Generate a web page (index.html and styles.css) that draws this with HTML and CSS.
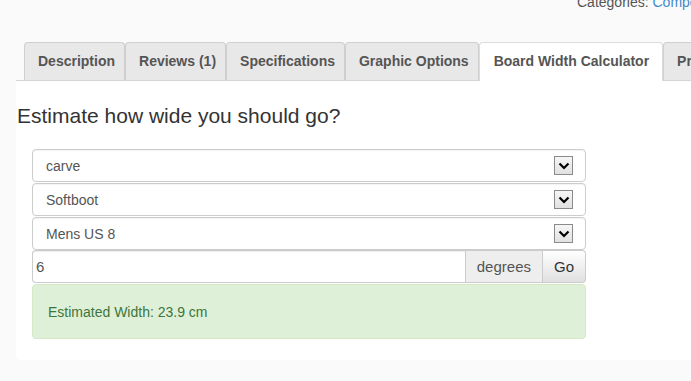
FILE: index.html
```html
<!DOCTYPE html>
<html lang="en">
<head>
    <meta charset="UTF-8">
    <meta name="viewport" content="width=device-width, initial-scale=1.0">
    <title>Board Width Calculator</title>
    <link rel="stylesheet" href="styles.css">
</head>
<body>
    <div class="page">
        <div class="categories">Categories: <a href="#">Components</a></div>

        <ul class="tabs">
            <li class="tab">Description</li>
            <li class="tab">Reviews (1)</li>
            <li class="tab">Specifications</li>
            <li class="tab">Graphic Options</li>
            <li class="tab active">Board Width Calculator</li>
            <li class="tab">Product Info</li>
        </ul>

        <div class="panel">
            <h3>Estimate how wide you should go?</h3>

            <form class="calc-form">
                <div class="select-box">
                    <span>carve</span>
                    <span class="arrow"><svg width="12" height="8" viewBox="0 0 12 8"><path d="M1.5 1.5 L6 6 L10.5 1.5" fill="none" stroke="#000" stroke-width="2.2"/></svg></span>
                </div>
                <div class="select-box">
                    <span>Softboot</span>
                    <span class="arrow"><svg width="12" height="8" viewBox="0 0 12 8"><path d="M1.5 1.5 L6 6 L10.5 1.5" fill="none" stroke="#000" stroke-width="2.2"/></svg></span>
                </div>
                <div class="select-box last">
                    <span>Mens US 8</span>
                    <span class="arrow"><svg width="12" height="8" viewBox="0 0 12 8"><path d="M1.5 1.5 L6 6 L10.5 1.5" fill="none" stroke="#000" stroke-width="2.2"/></svg></span>
                </div>
                <div class="input-group">
                    <input type="text" class="angle-input" value="6">
                    <span class="addon">degrees</span>
                    <button type="button" class="go-btn">Go</button>
                </div>
                <div class="alert-success">Estimated Width: 23.9 cm</div>
            </form>
        </div>
    </div>
</body>
</html>
```

FILE: styles.css
```css
/* Mise en forme générale */
body {
    font-family: "Liberation Sans", Arial, sans-serif;
    margin: 0;
    padding: 0;
    background: #fafafa;
    color: #333;
    overflow: hidden;
}

.page {
    width: 820px;
}

.categories {
    margin: -8px 0 0 577px;
    font-size: 14px;
    line-height: 20px;
    color: #555;
    white-space: nowrap;
}

.categories a {
    color: #428bca;
    text-decoration: none;
}

/* Onglets */
.tabs {
    list-style: none;
    display: flex;
    margin: 30px 0 0 16px;
    padding: 0 0 0 8px;
    border-bottom: 1px solid #d4d4d4;
}

.tab {
    font-size: 14px;
    font-weight: bold;
    color: #555;
    background: #e9e8e9;
    border: 1px solid #cfcfcf;
    border-bottom: none;
    border-radius: 4px 4px 0 0;
    padding: 0 9px 0 13px;
    height: 37px;
    line-height: 37px;
    white-space: nowrap;
}

.tab.active {
    background: #fff;
    border-color: #dcdcdc;
    padding: 0 13px 0 14px;
    height: 38px;
    margin-bottom: -1px;
}

/* Panneau */
.panel {
    background: #fff;
    margin-left: 16px;
    padding: 22px 0 21px 0;
    border-radius: 0 0 0 5px;
}

.panel h3 {
    font-size: 21px;
    font-weight: normal;
    line-height: 26px;
    margin: 0 0 20px 1px;
    color: #333;
}

.calc-form {
    margin-left: 16px;
    width: 554px;
}

.select-box {
    display: flex;
    justify-content: space-between;
    align-items: center;
    height: 31px;
    margin-bottom: 1px;
    border: 1px solid #ccc;
    border-radius: 4px;
    padding: 0 12px 0 13px;
    font-size: 14px;
    color: #555;
    background: #fff;
    box-shadow: inset 0 1px 1px rgba(0, 0, 0, 0.05);
}

.select-box.last {
    margin-bottom: 0;
}

.arrow {
    display: flex;
    align-items: center;
    justify-content: center;
    width: 17px;
    height: 17px;
    border: 1px solid #8a8a8a;
    background: linear-gradient(#f6f6f6, #e1e1e1);
}

.input-group {
    display: flex;
    height: 33px;
}

.angle-input {
    flex: 1;
    border: 1px solid #ccc;
    border-right: none;
    border-radius: 4px 0 0 4px;
    padding: 0 3px;
    font-family: inherit;
    font-size: 15px;
    color: #555;
    outline: none;
    box-shadow: inset 0 1px 1px rgba(0, 0, 0, 0.075);
}

.addon {
    display: flex;
    align-items: center;
    padding: 0 11px;
    font-size: 15px;
    color: #555;
    background: #eee;
    border: 1px solid #ccc;
}

.go-btn {
    font-family: inherit;
    font-size: 15px;
    color: #333;
    padding: 0 11px;
    background: linear-gradient(#fff, #e0e0e0);
    border: 1px solid #ccc;
    border-left: none;
    border-radius: 0 4px 4px 0;
}

.alert-success {
    margin-top: 1px;
    background: #dff0d8;
    border: 1px solid #d6e9c6;
    border-radius: 4px;
    color: #3c763d;
    font-size: 14px;
    line-height: 20px;
    padding: 17px 15px 16px;
}
```
